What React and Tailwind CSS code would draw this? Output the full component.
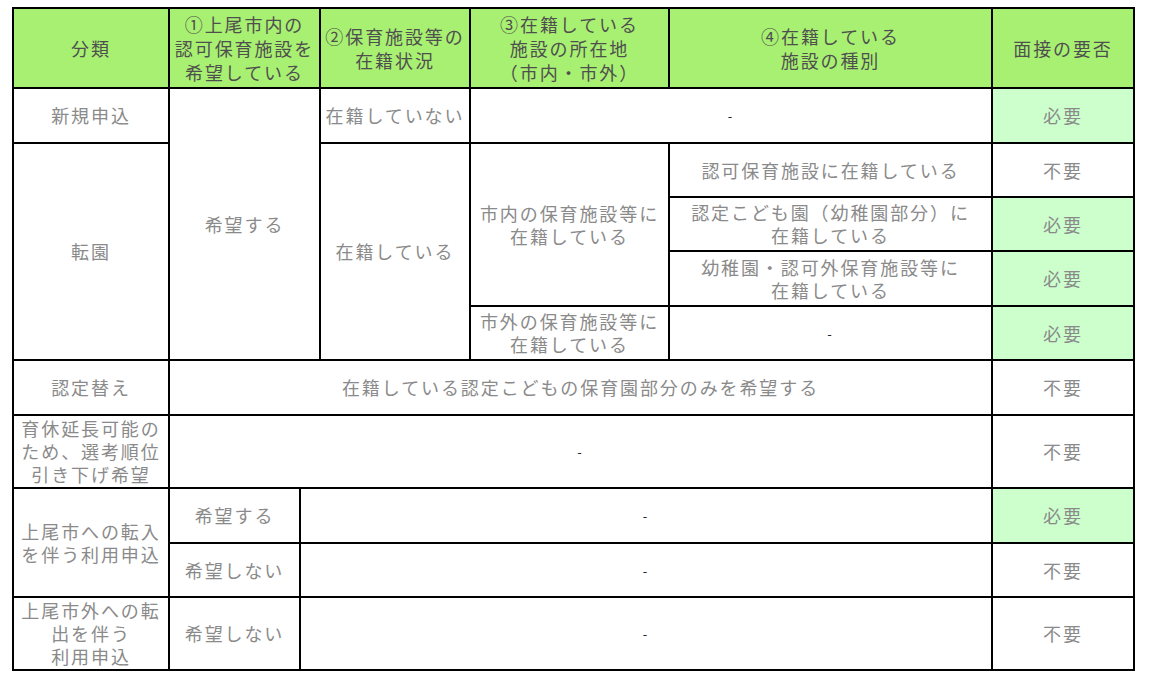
export default function App() {
  const base =
    "flex items-center justify-center text-center text-[#8a8a8a] leading-[23px]";
  const cell = `${base} bg-white`;
  const need = `${base} bg-[#ccffcc]`;
  const head =
    "flex items-center justify-center text-center bg-[#a8f071] text-[#4f4f4f] leading-[24px]";
  const dash = <span className="text-[#222] text-[13px]">-</span>;

  return (
    <div
      className="min-h-screen bg-white pt-[7px] pl-[12px]"
      style={{ fontFamily: '"Noto Sans CJK JP", "Noto Sans", sans-serif' }}
    >
      <div className="grid w-fit grid-cols-[154px_129px_18px_148px_197px_321px_140px] grid-rows-[78px_53px_52px_52px_53px_52px_53px_71px_53px_52px_71px] gap-[2px] bg-black p-[2px] text-[18px] tracking-[1.9px]">
        {/* header */}
        <div className={`${head} col-start-1 row-start-1`}>分類</div>
        <div className={`${head} col-start-2 col-span-2 row-start-1`}>
          ①上尾市内の<br />認可保育施設を<br />希望している
        </div>
        <div className={`${head} col-start-4 row-start-1`}>
          ②保育施設等の<br />在籍状況
        </div>
        <div className={`${head} col-start-5 row-start-1`}>
          ③在籍している<br />施設の所在地<br />（市内・市外）
        </div>
        <div className={`${head} col-start-6 row-start-1`}>
          ④在籍している<br />施設の種別
        </div>
        <div className={`${head} col-start-7 row-start-1`}>面接の要否</div>

        {/* 新規申込 */}
        <div className={`${cell} col-start-1 row-start-2`}>新規申込</div>
        <div className={`${cell} col-start-2 col-span-2 row-start-2 row-span-5`}>希望する</div>
        <div className={`${cell} col-start-4 row-start-2`}>在籍していない</div>
        <div className={`${cell} col-start-5 col-span-2 row-start-2`}>{dash}</div>
        <div className={`${need} col-start-7 row-start-2`}>必要</div>

        {/* 転園 */}
        <div className={`${cell} col-start-1 row-start-3 row-span-4`}>転園</div>
        <div className={`${cell} col-start-4 row-start-3 row-span-4`}>在籍している</div>
        <div className={`${cell} col-start-5 row-start-3 row-span-3`}>
          市内の保育施設等に<br />在籍している
        </div>
        <div className={`${cell} col-start-6 row-start-3`}>認可保育施設に在籍している</div>
        <div className={`${cell} col-start-7 row-start-3`}>不要</div>
        <div className={`${cell} col-start-6 row-start-4`}>
          認定こども園（幼稚園部分）に<br />在籍している
        </div>
        <div className={`${need} col-start-7 row-start-4`}>必要</div>
        <div className={`${cell} col-start-6 row-start-5`}>
          幼稚園・認可外保育施設等に<br />在籍している
        </div>
        <div className={`${need} col-start-7 row-start-5`}>必要</div>
        <div className={`${cell} col-start-5 row-start-6`}>
          市外の保育施設等に<br />在籍している
        </div>
        <div className={`${cell} col-start-6 row-start-6`}>{dash}</div>
        <div className={`${need} col-start-7 row-start-6`}>必要</div>

        {/* 認定替え */}
        <div className={`${cell} col-start-1 row-start-7`}>認定替え</div>
        <div className={`${cell} col-start-2 col-span-5 row-start-7`}>
          在籍している認定こどもの保育園部分のみを希望する
        </div>
        <div className={`${cell} col-start-7 row-start-7`}>不要</div>

        {/* 育休 */}
        <div className={`${cell} col-start-1 row-start-8`}>
          育休延長可能の<br />ため、選考順位<br />引き下げ希望
        </div>
        <div className={`${cell} col-start-2 col-span-5 row-start-8`}>{dash}</div>
        <div className={`${cell} col-start-7 row-start-8`}>不要</div>

        {/* 転入 */}
        <div className={`${cell} col-start-1 row-start-9 row-span-2`}>
          上尾市への転入<br />を伴う利用申込
        </div>
        <div className={`${cell} col-start-2 row-start-9`}>希望する</div>
        <div className={`${cell} col-start-3 col-span-4 row-start-9`}>{dash}</div>
        <div className={`${need} col-start-7 row-start-9`}>必要</div>
        <div className={`${cell} col-start-2 row-start-10`}>希望しない</div>
        <div className={`${cell} col-start-3 col-span-4 row-start-10`}>{dash}</div>
        <div className={`${cell} col-start-7 row-start-10`}>不要</div>

        {/* 転出 */}
        <div className={`${cell} col-start-1 row-start-11`}>
          上尾市外への転<br />出を伴う<br />利用申込
        </div>
        <div className={`${cell} col-start-2 row-start-11`}>希望しない</div>
        <div className={`${cell} col-start-3 col-span-4 row-start-11`}>{dash}</div>
        <div className={`${cell} col-start-7 row-start-11`}>不要</div>
      </div>
    </div>
  );
}
